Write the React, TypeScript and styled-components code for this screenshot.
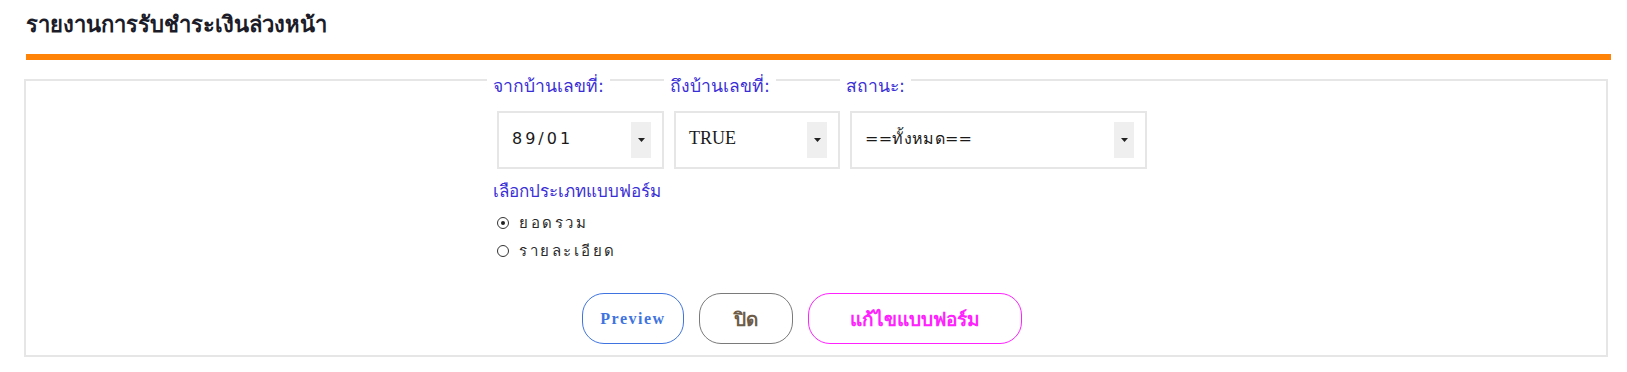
import React from 'react'
import styled, { createGlobalStyle } from 'styled-components'

const GlobalStyle = createGlobalStyle`
  body {
    margin: 0;
    background: #fff;
    font-family: Tahoma, "DejaVu Sans", "Noto Sans", sans-serif;
  }
`

type Option = { label: string; value: string; serif?: boolean; spacing: number }

const fields: { label: string; width: number; option: Option }[] = [
  { label: 'จากบ้านเลขที่:', width: 167, option: { label: '89/01', value: '89/01', spacing: 3 } },
  { label: 'ถึงบ้านเลขที่:', width: 166, option: { label: 'TRUE', value: 'TRUE', serif: true, spacing: 0 } },
  { label: 'สถานะ:', width: 297, option: { label: '==ทั้งหมด==', value: 'all', spacing: 0.3 } },
]

const formTypes = [
  { id: 'sum', label: 'ยอดรวม' },
  { id: 'detail', label: 'รายละเอียด' },
]

function App() {
  const [formType, setFormType] = React.useState('sum')

  return (
    <SPage>
      <GlobalStyle />
      <STitle>รายงานการรับชำระเงินล่วงหน้า</STitle>
      <SDivider />
      <SBox>
        <SForm>
          <SFieldRow>
            {fields.map((f) => (
              <SField key={f.label} width={f.width}>
                <SLabel>{f.label}</SLabel>
                <SSelect>
                  <SSelectValue serif={f.option.serif} spacing={f.option.spacing}>
                    {f.option.label}
                  </SSelectValue>
                  <SArrow>
                    <svg width="7" height="4" viewBox="0 0 7 4">
                      <path d="M0 0 L7 0 L3.5 4 Z" fill="#222" />
                    </svg>
                  </SArrow>
                </SSelect>
              </SField>
            ))}
          </SFieldRow>

          <SSectionLabel>เลือกประเภทแบบฟอร์ม</SSectionLabel>
          <SRadioList>
            {formTypes.map((t) => (
              <SRadioRow key={t.id} onClick={() => setFormType(t.id)}>
                <SRadio checked={formType === t.id} />
                <span>{t.label}</span>
              </SRadioRow>
            ))}
          </SRadioList>

          <SButtons>
            <SButton tone="#3f74e0" serif>Preview</SButton>
            <SButton tone="#7a7a7a" text="#6e5c48">ปิด</SButton>
            <SButton tone="#ff22ff" wide>แก้ไขแบบฟอร์ม</SButton>
          </SButtons>
        </SForm>
      </SBox>
    </SPage>
  )
}

export default App

const SPage = styled.div`
  padding: 13px 19px 0 24px;
`

const STitle = styled.h2`
  color: #1c1c28;
  font-size: 22px;
  font-weight: bold;
  height: 24px;
  line-height: 24px;
  margin: 0;
  padding-left: 2px;
`

const SDivider = styled.div`
  background-color: #ff8306;
  height: 6px;
  margin: 17px -3px 0 2px;
`

const SBox = styled.div`
  border: 2px solid #e6e6e6;
  height: 274px;
  margin-top: 19px;
`

const SForm = styled.div`
  display: flex;
  flex-direction: column;
  margin: -6px 0 0 471px;
`

const SFieldRow = styled.div`
  display: flex;
  gap: 10px;
`

const SField = styled.div<{ width: number }>`
  display: flex;
  flex-direction: column;
  width: ${({ width }) => width}px;
`

const SLabel = styled.label`
  align-self: flex-start;
  background-color: #fff;
  color: #3a2fd6;
  font-size: 17.5px;
  line-height: 20px;
  margin-left: -10px;
  padding: 1px 6px 0;
`

const SSelect = styled.div`
  align-items: center;
  border: 2px solid #e6e6e6;
  box-sizing: border-box;
  display: flex;
  height: 58px;
  justify-content: space-between;
  margin-top: 15px;
  padding: 0 11px 4px 13px;
`

const SSelectValue = styled.span<{ serif?: boolean; spacing: number }>`
  color: #1a1a1a;
  font-family: ${({ serif }) => (serif ? '"Liberation Serif", serif' : 'Tahoma, "DejaVu Sans", sans-serif')};
  font-size: ${({ serif }) => (serif ? '18px' : '16px')};
  letter-spacing: ${({ spacing }) => spacing}px;
`

const SArrow = styled.span`
  align-items: center;
  background-color: #efefef;
  display: flex;
  height: 36px;
  justify-content: center;
  margin-top: 4px;
  width: 20px;
`

const SSectionLabel = styled.div`
  color: #3a2fd6;
  font-size: 17px;
  line-height: 20px;
  margin-top: 12px;
  margin-left: -4px;
`

const SRadioList = styled.div`
  display: flex;
  flex-direction: column;
  gap: 8px;
  margin-top: 12px;
`

const SRadioRow = styled.div`
  align-items: center;
  color: #2a2a2a;
  cursor: pointer;
  display: flex;
  font-size: 15px;
  gap: 10px;
  height: 20px;
  letter-spacing: 2.5px;
`

const SRadio = styled.span<{ checked?: boolean }>`
  border: 1.5px solid #333;
  border-radius: 50%;
  box-sizing: border-box;
  height: 12px;
  position: relative;
  width: 12px;

  &::after {
    background-color: #222;
    border-radius: 50%;
    content: '';
    display: ${({ checked }) => (checked ? 'block' : 'none')};
    height: 4px;
    left: 2.5px;
    position: absolute;
    top: 2.5px;
    width: 4px;
  }
`

const SButtons = styled.div`
  display: flex;
  gap: 15px;
  margin: 32px 0 0 85px;
`

const SButton = styled.button<{ tone: string; text?: string; serif?: boolean; wide?: boolean }>`
  background-color: #fff;
  border: 1.5px solid ${({ tone }) => tone};
  border-radius: 22px;
  color: ${({ tone, text }) => text || tone};
  cursor: pointer;
  font-family: ${({ serif }) => (serif ? '"Liberation Serif", serif' : 'Tahoma, "DejaVu Sans", sans-serif')};
  font-size: ${({ serif }) => (serif ? '16px' : '19px')};
  font-weight: bold;
  height: 51px;
  letter-spacing: ${({ serif }) => (serif ? '1.5px' : '0')};
  padding: 0;
  width: ${({ wide, serif }) => (wide ? '214px' : serif ? '102px' : '94px')};

  :hover {
    opacity: 0.7;
  }
`
